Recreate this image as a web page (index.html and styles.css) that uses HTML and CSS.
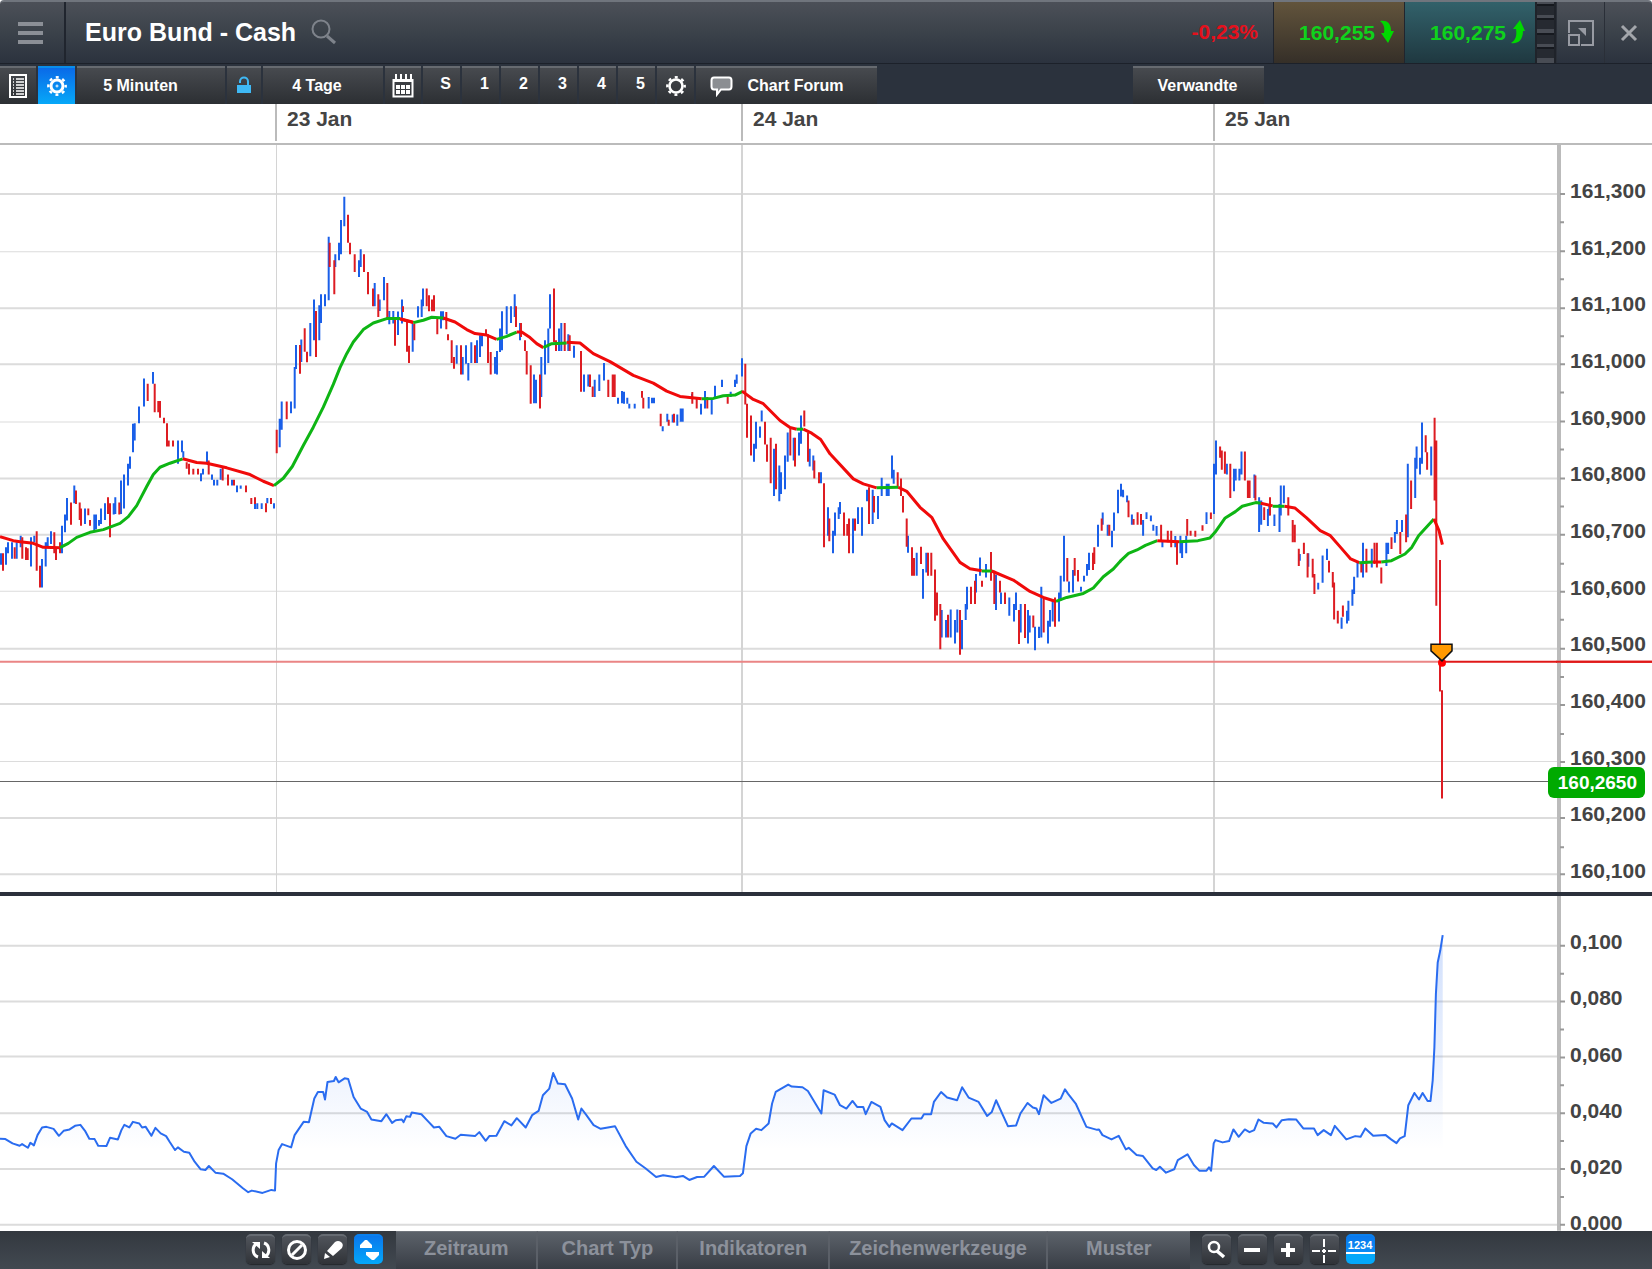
FILE: index.html
```
<!DOCTYPE html>
<html lang="de">
<head>
    <meta charset="UTF-8">
    <meta name="viewport" content="width=device-width, initial-scale=1.0">
    <title>Euro Bund - Cash</title>
    <link rel="stylesheet" href="styles.css">
</head>
<body>
    <header class="titlebar">
        <button class="menu-button" aria-label="Menu">
            <svg width="25" height="22" viewBox="0 0 25 22"><path d="M0 2h25M0 11h25M0 20h25" stroke="#8b8f96" stroke-width="4"/></svg>
        </button>
        <h1>Euro Bund - Cash</h1>
        <button class="search-button" aria-label="Suche">
            <svg width="26" height="26" viewBox="0 0 26 26" fill="none" stroke="#7e838b" stroke-width="2"><circle cx="10" cy="10" r="8.5"/><path d="M16 17l8 7" stroke-width="3"/></svg>
        </button>
        <span class="change">-0,23%</span>
        <button class="price sell">160,255
            <svg width="14" height="24" viewBox="0 0 14 24"><path d="M0 1C6 0 11 2 11 11h3L8 23 1 13h3C5 8 4 4 0 1z" fill="#00d800"/></svg>
        </button>
        <button class="price buy">160,275
            <svg width="14" height="24" viewBox="0 0 14 24"><path d="M0 23C6 24 12 21 12 11h2L9 0 2 9h3C6 15 5 20 0 23z" fill="#00d800"/></svg>
        </button>
        <div class="ladder"><i></i><i></i><i></i><i></i></div>
        <button class="window-button" aria-label="Maximieren">
            <svg width="26" height="26" viewBox="0 0 26 26" fill="none" stroke="#989ba3" stroke-width="2"><path d="M1 13V1h24v24H13"/><path d="M1 15h10v10H1z"/><path d="M10 8h8v8z" fill="#989ba3" stroke="none"/></svg>
        </button>
        <button class="window-button" aria-label="Schliessen">
            <svg width="18" height="18" viewBox="0 0 18 18"><path d="M2 2l14 14M16 2L2 16" stroke="#a3a6ab" stroke-width="3"/></svg>
        </button>
    </header>

    <nav class="toolbar">
        <button class="tool list" aria-label="Liste">
            <svg width="18" height="24" viewBox="0 0 18 24" fill="none" stroke="#fff"><path d="M1 1h16v22H1z" stroke-width="2"/><path d="M7 5h8M7 8h8M7 11h8M7 14h8M7 17h8M7 20h8M4 5h1M4 8h1M4 11h1M4 14h1M4 17h1M4 20h1" stroke-width="1.5"/></svg>
        </button>
        <button class="tool active" aria-label="Einstellungen">
            <svg width="20" height="20" viewBox="0 0 20 20" fill="none" stroke="#fff"><circle cx="10" cy="10" r="6" stroke-width="3"/><circle cx="10" cy="10" r="8.7" stroke-width="2.4" stroke-dasharray="3 3.83" stroke-dashoffset="1.5"/><circle cx="10" cy="10" r="1" stroke-width="1"/></svg>
        </button>
        <button class="tool interval">5 Minuten</button>
        <button class="tool lock" aria-label="Sperren">
            <svg width="14" height="17" viewBox="0 0 14 17"><path d="M0 9h14v8H0z" fill="#3fb9f5"/><path d="M3 7V5.500C3 0 11 0 11 5.500V9" fill="none" stroke="#3fb9f5" stroke-width="2"/></svg>
        </button>
        <button class="tool range">4 Tage</button>
        <button class="tool calendar" aria-label="Kalender">
            <svg width="22" height="24" viewBox="0 0 22 24"><path d="M1.500 6h19v16.500h-19z" fill="none" stroke="#fff" stroke-width="2"/><path d="M1 7h20M4 0v6M9 0v6M14 0v6M19 0v6" stroke="#fff" stroke-width="2"/><path d="M4 11h4v4H4zM9 11h4v4H9zM14 11h4v4h-4zM4 16h4v4H4zM9 16h4v4H9zM14 16h4v4h-4z" fill="#fff"/></svg>
        </button>
        <button class="tool preset">S</button>
        <button class="tool preset">1</button>
        <button class="tool preset">2</button>
        <button class="tool preset">3</button>
        <button class="tool preset">4</button>
        <button class="tool preset">5</button>
        <button class="tool" aria-label="Optionen">
            <svg width="20" height="20" viewBox="0 0 20 20" fill="none" stroke="#fff"><circle cx="10" cy="10" r="6.500" stroke-width="2.600"/><circle cx="10" cy="10" r="8.700" stroke-width="2.400" stroke-dasharray="3 3.83" stroke-dashoffset="1.500"/></svg>
        </button>
        <button class="tool forum">
            <svg width="23" height="21" viewBox="0 0 23 21"><path d="M4 1.500h15q2.500 0 2.500 3v6q0 3-2.500 3h-8l-4 5v-5H4q-2.500 0-2.500-3v-6q0-3 2.500-3z" fill="#8b8e92" stroke="#fff" stroke-width="2"/></svg>
            Chart Forum
        </button>
        <button class="tool related">Verwandte</button>
    </nav>

    <div class="timeline">
        <span>23 Jan</span>
        <span>24 Jan</span>
        <span>25 Jan</span>
    </div>

    <main class="charts">
        <section class="pane price-pane">
            <svg class="plot" viewBox="0 145 1652 746" preserveAspectRatio="none">
                <path class="grid" d="M0 194H1557M0 308H1557M0 364H1557M0 478H1557M0 534H1557M0 648H1557M0 703H1557M0 817H1557M0 873H1557"/>
                <path class="grid thin" d="M0 251.500H1557M0 421.500H1557M0 590.500H1557M0 760.500H1557"/>
                <path class="grid days" d="M742 145V891M1214 145V891"/>
                <path class="grid days thin" d="M276.500 145V891"/>
                <path class="alert-line faint" d="M0 661H1440"/>
                <path class="alert-line" d="M1440 661H1652"/>
                <path class="last-line" d="M0 780.500H1560"/>
                <g id="candles"></g>
                <g id="average"></g>
                <path class="axis" d="M1559 145V891"/>
                <path class="ticks" d="M1560 194h5M1560 251h5M1560 308h5M1560 364h5M1560 421h5M1560 478h5M1560 534h5M1560 591h5M1560 648h5M1560 704h5M1560 761h5M1560 817h5M1560 873h5M1560 222h4M1560 279h4M1560 336h4M1560 392h4M1560 449h4M1560 506h4M1560 563h4M1560 619h4M1560 676h4M1560 733h4M1560 789h4M1560 846h4"/>
                <path class="alert-line" d="M1556 661H1652"/>
                <circle cx="1442" cy="662" r="4" fill="#f00"/>
                <path d="M1431 643.500H1452V650L1442 660L1431 650Z" fill="#f90" stroke="#111" stroke-width="1.500"/>
            </svg>
            <ul class="scale">
                <li>161,300</li>
                <li>161,200</li>
                <li>161,100</li>
                <li>161,000</li>
                <li>160,900</li>
                <li>160,800</li>
                <li>160,700</li>
                <li>160,600</li>
                <li>160,500</li>
                <li>160,400</li>
                <li>160,300</li>
                <li>160,200</li>
                <li>160,100</li>
            </ul>
            <output class="price-tag">160,2650</output>
        </section>

        <section class="pane indicator-pane">
            <svg class="plot" viewBox="0 895 1652 336" preserveAspectRatio="none">
                <defs>
                    <linearGradient id="fade" gradientUnits="userSpaceOnUse" x1="0" y1="935" x2="0" y2="1150">
                        <stop offset="0" stop-color="#2a6cf0" stop-opacity=".22"/>
                        <stop offset="1" stop-color="#2a6cf0" stop-opacity="0"/>
                    </linearGradient>
                </defs>
                <path class="grid" d="M0 945H1557M0 1001H1557M0 1056H1557M0 1113H1557M0 1169H1557M0 1225H1557"/>
                <path id="area" fill="url(#fade)"/>
                <path id="line" class="indicator-line"/>
                <path class="axis" d="M1559 895V1231"/>
                <path class="ticks" d="M1560 945h5M1560 1001h5M1560 1057h5M1560 1113h5M1560 1169h5M1560 1225h5M1560 973h4M1560 1029h4M1560 1085h4M1560 1141h4M1560 1197h4"/>
            </svg>
            <ul class="scale">
                <li>0,100</li>
                <li>0,080</li>
                <li>0,060</li>
                <li>0,040</li>
                <li>0,020</li>
                <li>0,000</li>
            </ul>
        </section>
    </main>

    <footer class="bottombar">
        <div class="icons left">
            <button class="icon" aria-label="Aktualisieren">
                <svg width="20" height="20" viewBox="0 0 20 20" fill="none" stroke="#fff" stroke-width="3"><path d="M7 17C1 15 1 7 5 4M13 3c6 2 6 10 2 13"/><path d="M1 2h8v7zM19 18h-8v-7z" fill="#fff" stroke="none"/></svg>
            </button>
            <button class="icon" aria-label="Entfernen">
                <svg width="22" height="22" viewBox="0 0 22 22" fill="none" stroke="#fff" stroke-width="3"><circle cx="11" cy="11" r="8.500"/><path d="M6 16L16 6"/></svg>
            </button>
            <button class="icon" aria-label="Zeichnen">
                <svg width="20" height="20" viewBox="0 0 20 20" fill="#fff"><path d="M1 19l1-6 5 4zM4 11L12 2q3-2 6 0t1 6l-9 8z"/></svg>
            </button>
            <button class="icon active" aria-label="Skalieren">
                <svg width="20" height="22" viewBox="0 0 20 22" fill="#fff"><path d="M1 9V6l5-5h2l5 5v3zM7 13h13v3l-5 5h-2l-6-5z"/></svg>
            </button>
        </div>
        <nav class="tabs">
            <button>Zeitraum</button>
            <button>Chart Typ</button>
            <button>Indikatoren</button>
            <button>Zeichenwerkzeuge</button>
            <button>Muster</button>
        </nav>
        <div class="icons right">
            <button class="icon" aria-label="Zoom">
                <svg width="20" height="20" viewBox="0 0 20 20" fill="none" stroke="#fff"><circle cx="8" cy="7" r="5" stroke-width="2.500"/><path d="M11 11l7 6" stroke-width="3.500"/></svg>
            </button>
            <button class="icon" aria-label="Verkleinern">
                <svg width="16" height="16" viewBox="0 0 16 16"><path d="M0 8h16" stroke="#fff" stroke-width="4"/></svg>
            </button>
            <button class="icon" aria-label="Vergr&ouml;&szlig;ern">
                <svg width="16" height="16" viewBox="0 0 16 16"><path d="M1 8h14M8 1v14" stroke="#fff" stroke-width="4"/></svg>
            </button>
            <button class="icon" aria-label="Fadenkreuz">
                <svg width="26" height="26" viewBox="0 0 26 26"><path d="M1 14h8M11 14h4M17 14h8M13 2v8M13 12v4M13 18v8" stroke="#fff" stroke-width="2"/></svg>
            </button>
            <button class="icon active digits">1234</button>
        </div>
    </footer>
    <script src="chart.js"></script>
</body>
</html>
```
FILE: styles.css
```
* {
    box-sizing: border-box;
}
body {
    margin: 0;
    min-height: 100vh;
    display: flex;
    flex-direction: column;
    background: #fff;
    font-family: "Liberation Sans", Arial, sans-serif;
    font-weight: bold;
}
button {
    margin: 0;
    padding: 0;
    border: none;
    background: none;
    color: #fff;
    font: inherit;
    cursor: pointer;
    display: flex;
    align-items: center;
    justify-content: center;
}
svg {
    flex: none;
}

/* Title bar */
.titlebar {
    display: flex;
    height: 64px;
    border-top: 2px solid #70757d;
    border-bottom: 1px solid #1c212a;
    border-radius: 4px 4px 0 0;
    background: linear-gradient(#4c5058, #3b424a 50%, #2b323e);
}
.menu-button {
    width: 66px;
    padding-right: 4px;
    border-right: 2px solid #20252e;
}
.titlebar h1 {
    margin: 0;
    padding: 0 15px 0 19px;
    line-height: 60px;
    font-size: 25px;
    color: #fff;
    white-space: nowrap;
}
.search-button {
    padding-bottom: 2px;
}
.change {
    margin-left: auto;
    padding-right: 15px;
    line-height: 60px;
    font-size: 21px;
    color: #e5101c;
}
.price {
    width: 131px;
    padding: 0 10px 0 0;
    justify-content: flex-end;
    gap: 5px;
    border-left: 1px solid #20252e;
    font-size: 21px;
    color: #0fd21c;
}
.price svg {
    margin-bottom: 2px;
}
.sell {
    background: linear-gradient(#62543c, #352f28);
}
.buy {
    background: linear-gradient(#32616a, #1f3840);
}
.ladder {
    width: 21px;
    display: flex;
    flex-direction: column;
    justify-content: space-between;
    padding: 2px 0 5px;
    background: #484c54;
    border-left: 2px solid #1f232a;
    border-right: 2px solid #1f232a;
}
.ladder i {
    height: 11px;
    background: #262a31;
    border-top: 2px solid #16191f;
}
.window-button {
    width: 48px;
    border-left: 1px solid #2a2f38;
}

/* Toolbar */
.toolbar {
    display: flex;
    height: 40px;
    padding-top: 2px;
    gap: 2px;
    background: #2b323d;
}
.tool {
    width: 37px;
    border-top: 2px solid #666a70;
    background: linear-gradient(#474a4f, #2c2f33);
    font-size: 16px;
}
.tool.list, .tool.calendar {
    width: 36px;
}
.tool.active {
    border-top-color: #0a8dea;
    background: linear-gradient(#0a6ae8, #06a8f8);
}
.interval {
    width: 148px;
    padding-right: 21px;
}
.tool.lock {
    width: 34px;
    padding-bottom: 4px;
}
.range {
    width: 120px;
    padding-right: 12px;
}
.preset {
    padding: 0 0 4px 8px;
}
.forum {
    width: 181px;
    gap: 15px;
    padding-right: 20px;
}
.related {
    width: 131px;
    margin: 0 388px 0 auto;
    padding-right: 2px;
}

/* Dates above the plot */
.timeline {
    display: grid;
    grid-template-columns: 466fr 472fr 439fr;
    height: 41px;
    padding: 0 0 2px calc(100% * 275 / 1652);
    border-bottom: 2px solid #bbb;
}
.timeline span {
    padding-left: 10px;
    border-left: 2px solid #bbb;
    font-size: 21px;
    line-height: 30px;
    color: #444;
}

/* Chart panes */
.charts {
    flex: 1;
    display: flex;
    flex-direction: column;
}
.pane {
    position: relative;
    display: grid;
    grid-template: minmax(0, 1fr) / 1fr;
    overflow: hidden;
}
.price-pane {
    flex: 750 1 0;
    border-bottom: 4px solid #2b303b;
}
.indicator-pane {
    flex: 336 1 0;
}
.plot {
    grid-area: 1 / 1;
    width: 100%;
    height: 100%;
}
.scale {
    grid-area: 1 / 1;
    justify-self: end;
    width: 82px;
    margin: 0;
    padding: 34px 0 9px;
    list-style: none;
    display: flex;
    flex-direction: column;
    justify-content: space-between;
    font-size: 21px;
    line-height: 24px;
    color: #444;
}
.indicator-pane .scale {
    margin-bottom: -4px;
    padding: 34px 0 0;
}
.price-tag {
    position: absolute;
    top: 83.2%;
    right: 7px;
    padding: 0 8px 0 10px;
    border-radius: 6px;
    background: #0a0;
    color: #fff;
    font-size: 19px;
    line-height: 31px;
}
.grid {
    stroke: #dcdcdc;
    stroke-width: 2;
}
.days {
    stroke: #d4d4d4;
}
.thin {
    stroke-width: 1;
}
.axis {
    stroke: #bbb;
    stroke-width: 4;
}
.ticks {
    stroke: #999;
    stroke-width: 2;
}
.alert-line {
    stroke: #e01818;
    stroke-width: 2;
}
.faint {
    stroke: #ea8585;
}
.last-line {
    stroke: #666;
    stroke-width: 1;
}
.up, .down {
    stroke-width: 2;
}
.up {
    stroke: #1a5fe8;
}
.down {
    stroke: #dd1c22;
}
.rising, .falling {
    fill: none;
    stroke-width: 3;
    stroke-linejoin: round;
}
.rising {
    stroke: #0eb514;
}
.falling {
    stroke: #f00a0a;
}
.indicator-line {
    fill: none;
    stroke: #2a6cf0;
    stroke-width: 2;
    stroke-linejoin: round;
}

/* Bottom bar */
.bottombar {
    display: flex;
    height: 38px;
    background: linear-gradient(#33383f, #424951);
}
.icons {
    display: flex;
    gap: 7px;
    padding-top: 3px;
}
.left {
    padding-left: 246px;
    padding-right: 13px;
}
.right {
    padding-left: 12px;
}
.icon {
    width: 29px;
    height: 30px;
    border-top: 2px solid #666b72;
    border-radius: 5px;
    background: linear-gradient(#50545b, #303338);
    box-shadow: 0 1px 1px #24272b;
}
.icon.active {
    border-top-color: #0a80ee;
    background: linear-gradient(#0a78ec, #04a8fa);
    box-shadow: none;
}
.icon.digits {
    background: linear-gradient(#0a78ec, #0a8cf4 58%, #fff 58%, #fff 66%, #04a8fa 66%);
    align-items: flex-start;
    padding-top: 3px;
    font-size: 11px;
}
.tabs {
    display: flex;
}
.tabs button {
    padding: 0 28px 4px;
    border-right: 2px solid #5b6068;
    border-top: 1px solid #70757c;
    background: linear-gradient(#5c626a, #383d45);
    color: #8c919b;
    font-size: 20px;
}
.tabs button:nth-child(2) {
    padding: 0 23px 4px;
}
.tabs button:nth-child(3) {
    padding: 0 21px 4px;
}
.tabs button:nth-child(4) {
    padding: 0 19px 4px;
}
.tabs button:last-child {
    padding: 0 38px 4px;
    border-right: none;
}
```
FILE: chart.js
```
// Each block: origin and scale of its samples, candles as "x high low", average as polylines
const blocks = [
    {
        x: 0, y: 180, sx: 3, sy: 3,
        up: '3 1118 1152,18 1100 1152,24 1085 1118,36 1085 1134,50 1085 1134,62 1065 1100,93 1070 1157,103 1065 1085,126 1135 1220,137 1085 1157,143 1070 1100,153 1052 1090,186 1035 1118,195 1002 1055,201 952 1020,223 915 968,255 984 1030,283 1002 1050,288 1002 1046,297 1018 1035,303 984 1030,315 968 1018,341 968 1002,346 950 1000,363 900 1000,372 882 984,384 850 915,390 828 865,399 730 815,404 728 780,417 678 728,432 594 678,459 575 610,534 780 850,546 780 815,550 812 832,603 878 902,609 865 882,621 813 850,636 882 898,642 898 915,652 898 915,662 865 898,696 898 915,711 915 935,722 915 925,765 965 985,772 968 985,785 968 985,802 952 968,822 968 984,839 715 800,845 663 748,873 663 698,884 560 684,888 494 566,904 478 545,931 428 528,942 358 480,958 375 480,963 342 428,975 342 378,986 170 360,1006 222 260,1017 188 240,1023 120 222,1033 50 138,1077 240 290,1082 207 260,1124 308 378,1139 358 392,1152 290 360,1168 392 432,1180 392 430,1194 394 464,1206 358 430,1238 430 514',
        down: '9 1118 1170,44 1100 1134,67 1070 1134,78 1100 1138,83 1103 1138,110 1052 1170,120 1155 1220,163 1055 1118,168 1100 1138,180 1085 1118,213 966 1032,228 930 970,239 966 1018,243 984 1035,265 984 1004,270 1018 1035,324 950 1000,330 968 1070,358 966 1002,443 610 662,464 610 695,475 662 695,480 662 712,492 712 728,501 728 798,506 780 798,519 780 798,560 845 865,567 850 882,580 865 882,594 865 882,626 840 882,668 862 900,684 882 915,702 898 915,738 915 935,754 952 970,765 950 970,798 968 995,813 952 970,830 748 818,860 663 716,900 494 580,914 444 514,921 514 546,948 392 530,989 188 260,1003 240 342,1044 104 188,1050 188 222,1064 222 275,1092 222 275,1104 275 342,1119 325 378,1135 342 410,1162 308 415,1185 415 496,1209 378 395,1221 425 514,1227 496 548,1243 430 480',
        average: [
            ['falling', '0 1068,40 1080,60 1083,100 1088,130 1100,180 1101'],
            ['rising', '180 1101,205 1088,230 1070,270 1055,310 1047,360 1028,385 1008,410 975,440 918,460 882,480 860,510 848,548 835'],
            ['falling', '548 835,590 846,620 848,680 862,750 882,790 902,822 915'],
            ['rising', '822 915,850 893,877 858,910 795,940 740,970 680,1000 612,1020 562,1040 520,1060 485,1090 448,1120 428,1160 415,1200 415'],
            ['falling', '1200 415,1240 426']
        ]
    },
    {
        x: 400, y: 260, sx: 3, sy: 3,
        up: '54 138 172,65 118 170,69 85 138,123 153 205,129 153 180,170 255 310,188 290 342,198 255 310,205 308 360,214 246 308,231 240 308,240 225 290,246 225 258,285 290 340,291 272 342,300 205 275,306 153 270,320 138 222,333 138 188,344 102 170,360 188 240,402 342 428,408 358 428,424 290 410,435 240 342,445 205 308,450 102 205,477 205 272,484 188 272,505 222 272,522 256 292,552 342 394,565 342 378,584 358 410,598 342 392,612 308 360,654 412 430,666 392 428,672 394 430,682 412 430,688 430 444,704 430 444,746 410 444,756 412 428,762 412 428,788 497 512,802 460 484,818 462 486,832 462 496,842 444 484,848 444 484,876 400 415,903 430 462,915 392 444,935 415 462,945 376 410,966 358 380,992 394 410,1005 358 380,1010 342 370,1026 294 348',
        down: '80 85 138,87 105 153,96 118 153,102 105 153,112 175 222,139 155 207,144 222 240,155 240 308,162 290 325,183 255 342,225 255 308,258 207 225,264 222 308,272 275 342,348 138 200,363 188 230,375 240 272,380 272 342,392 315 430,420 342 444,462 85 245,468 240 272,494 188 272,509 225 272,543 272 394,570 342 380,578 378 410,625 358 410,638 342 410,644 342 410,726 392 412,730 412 444,782 460 497,806 478 496,822 460 486,877 395 430,890 410 444,922 410 444,983 410 430,1036 310 432',
        average: [
            ['falling', '0 176,40 187'],
            ['rising', '40 187,70 180,95 171,130 173'],
            ['falling', '130 173,165 185,200 208,225 220,260 224,290 237'],
            ['rising', '290 237,320 228,350 215'],
            ['falling', '350 215,365 215,390 232,410 250,430 262'],
            ['rising', '430 262,455 250,500 248'],
            ['falling', '500 246,540 248,580 280,630 304,700 345,760 368,800 392,840 408,905 415'],
            ['rising', '905 415,940 414,970 406,1005 404,1028 393']
        ]
    },
    {
        x: 730, y: 340, sx: 3, sy: 3,
        up: '72 310 364,78 244 325,90 258 292,95 210 243,132 325 466,148 375 482,153 395 460,165 345 446,173 276 364,191 292 360,207 276 345,213 225 310,239 325 378,250 345 390,273 395 428,294 500 585,309 570 638,315 516 585,326 500 535,330 484 520,369 534 638,384 500 550,396 500 585,411 448 482,428 448 550,444 466 535,455 412 466,470 430 466,476 430 466,486 345 414,491 388 430,534 585 636,560 636 705,579 685 774,589 636 695,635 808 890,648 838 890,662 806 890,675 838 908,682 806 875,696 838 925,707 790 838,711 738 806,738 700 755,750 650 705,768 670 710,798 702 808,813 755 790,838 770 825,852 790 842,858 755 808,872 790 875,894 808 908,899 824 875,915 858 928,927 858 892,934 738 890,954 840 908,960 808 858,968 780 842,987 755 842,992 705 780,1002 585 722,1017 722 755,1029 688 755,1053 738 752,1062 705 722,1071 670 705,1077 636 688,1104 552 618,1118 516 552,1133 552 585,1146 570 620,1152 516 570,1164 448 518,1173 430 466,1179 448 466',
        down: '51 190 292,63 225 345,105 244 312,111 312 364,122 292 428,138 310 446,181 264 345,195 292 378,223 210 258,234 276 364,253 360 414,267 395 428,282 428 620,298 534 602,342 516 585,352 550 585,357 534 638,375 534 570,417 440 550,432 466 516,503 395 440,513 414 466,519 466 516,530 534 618,546 620 705,552 652 705,573 618 670,594 636 705,604 636 705,615 686 840,621 755 824,631 790 925,654 822 890,690 808 942,723 738 790,735 720 790,756 720 738,783 634 720,793 690 790,810 720 755,825 755 790,867 808 910,885 790 892,910 824 860,941 775 875,975 770 858,1012 652 722,1034 652 705,1044 688 722,1089 636 688,1093 620 670,1115 534 570,1138 552 585',
        average: [
            ['falling', '36 152,70 177,100 190,150 240,180 261,200 266'],
            ['rising', '200 266,220 266'],
            ['falling', '220 266,245 278,272 297,300 340,370 415,400 430,440 442'],
            ['rising', '440 442,505 440'],
            ['falling', '505 440,530 452,570 500,605 530,640 595,690 665,720 684,755 690'],
            ['rising', '755 691,785 691'],
            ['falling', '785 691,850 718,900 752,940 770,978 782'],
            ['rising', '978 782,1010 770,1060 758,1090 742,1120 708,1150 685,1172 660']
        ]
    },
    {
        x: 1120, y: 400, sx: 2.947, sy: 3,
        up: '3 255 288,9 272 290,21 285 305,35 342 372,68 358 405,78 335 355,91 345 362,98 372 390,108 376 405,125 420 440,163 406 440,178 405 458,183 425 472,195 405 458,255 335 370,277 190 340,283 120 222,315 190 222,336 205 272,341 205 240,352 205 240,358 153 222,396 222 292,410 290 394,416 300 372,436 325 376,440 310 345,455 342 376,470 310 394,474 255 345,483 255 308,530 460 480,555 458 498,584 546 566,597 464 546,610 444 478,653 650 684,669 630 668,673 600 660,685 566 615,690 528 580,700 485 530,716 426 530,742 444 500,785 426 496,790 426 460,810 394 426,816 358 400,831 358 394,848 190 410,870 172 292,874 138 205,884 172 222,890 66 190,917 138 225',
        down: '25 300 350,40 355 372,52 335 372,62 340 372,121 372 420,141 390 425,151 390 440,168 420 492,198 355 405,208 390 405,222 390 408,243 374 390,268 336 355,295 138 172,300 150 208,309 153 220,325 190 292,368 153 240,377 240 292,382 240 292,399 225 300,425 320 358,442 290 345,496 290 345,509 358 425,515 372 425,527 444 496,542 426 460,553 458 530,568 474 530,573 520 580,616 480 515,627 514 560,631 545 656,642 630 668,657 614 648,711 485 515,726 444 515,750 426 490,757 426 500,770 500 548,800 410 445,826 394 460,843 342 425,858 240 325,901 104 155,905 155 208,927 52 300,932 120 615,943 478 872,949 868 1192',
        average: [
            ['rising', '0 482,25 458,50 448,75 434,110 420'],
            ['falling', '110 420,175 423'],
            ['rising', '175 423,230 420,265 412,280 395,310 352,340 333,360 317,400 306,415 308'],
            ['falling', '415 308,450 316'],
            ['rising', '450 317,485 317'],
            ['falling', '485 317,515 322,550 352,590 390,620 405,650 440,680 475,705 486'],
            ['rising', '705 486,745 484'],
            ['falling', '745 484,770 484'],
            ['rising', '770 484,800 480,840 460,860 440,880 405,925 355'],
            ['falling', '925 355,940 390,950 432']
        ]
    }
];

const indicator = [
    { x: 0, y: 1040, sx: 2.8, sy: 3, points: '0 296,15 297,35 310,55 317,62 312,78 323,85 308,95 316,105 285,118 262,130 260,150 266,165 287,178 272,195 268,210 257,225 254,238 272,250 296,265 297,275 317,298 318,308 293,330 298,340 270,348 254,362 262,372 245,390 250,398 262,408 260,424 287,435 263,450 280,465 288,475 305,490 330,498 322,515 335,530 338,545 365,562 388,575 390,585 378,603 398,625 401,650 418,680 445,695 457,705 452,735 459,760 450,770 452,773 370,780 330,790 312,815 322,825 285,850 245,865 246,880 175,890 155,905 155,910 178,917 125,935 122,940 110,948 126,965 114,975 116,990 170,1010 205,1028 215,1040 238,1068 243,1082 222,1098 248,1108 240,1125 238,1130 246,1138 228,1148 230,1153 217,1180 222,1200 245,1215 262,1230 260,1250 288,1275 296,1290 284,1330 288,1342 276,1360 302,1370 288,1390 287,1412 243,1432 256,1447 234,1472 262,1490 225,1508 212,1520 165,1538 145,1549 98' },
    { x: 540, y: 1040, sx: 2.8, sy: 3, points: '50 130,70 132,90 175,107 238,116 205,130 225,150 255,170 266,210 258,240 318,270 365,295 385,325 411,345 406,380 412,400 408,418 420,440 411,460 410,487 378,515 410,560 408,568 400,578 318,590 280,605 266,620 270,640 250,650 190,660 155,695 133,705 139,735 141,750 152,788 220,794 150,825 163,840 195,858 205,875 182,888 200,905 200,912 222,928 185,953 200,965 240,978 260,985 250,1015 270,1040 235,1068 235,1075 222,1095 222,1103 185,1123 155,1140 172,1168 180,1182 141,1200 172,1228 185,1252 227,1265 215,1277 180,1310 258,1333 256,1345 220,1365 188,1380 202,1390 205,1397 222,1410 165,1432 188,1458 175,1470 147,1478 160,1500 190,1530 260,1560 269' },
    { x: 1090, y: 880, sx: 2.79, sy: 3, points: '25 748,35 765,60 778,80 767,100 808,108 803,130 825,148 828,175 865,185 870,195 860,212 878,235 868,245 840,272 823,290 855,305 872,325 872,332 862,338 872,345 790,350 780,370 787,388 783,400 748,415 770,432 748,445 756,458 750,470 718,485 728,510 730,520 742,535 720,555 717,575 718,595 745,625 745,635 765,652 750,672 765,683 737,715 778,740 768,755 770,768 745,790 767,825 765,840 778,855 789,865 775,878 768,888 675,905 638,918 658,928 638,942 662,950 662,956 600,961 500,965 340,970 245,977 210,984 163' }
];

const parse = text => text.split(',').map(item => item.split(' ').map(Number));
const px = (block, x) => (block.x + x / block.sx).toFixed(1);
const py = (block, y) => (block.y + y / block.sy).toFixed(1);

function addPath(parent, name, d) {
    const path = document.createElementNS('http://www.w3.org/2000/svg', 'path');
    path.setAttribute('class', name);
    path.setAttribute('d', d);
    parent.appendChild(path);
}

const candles = document.getElementById('candles');
const average = document.getElementById('average');

blocks.forEach(block => {
    ['up', 'down'].forEach(kind => {
        const d = parse(block[kind]).map(([x, high, low]) => `M${px(block, x)} ${py(block, high)}V${py(block, low)}`);
        addPath(candles, kind, d.join(''));
    });
    block.average.forEach(([kind, points]) => {
        const d = parse(points).map(([x, y]) => `${px(block, x)} ${py(block, y)}`);
        addPath(average, kind, 'M' + d.join('L'));
    });
});

const line = indicator.flatMap(part => parse(part.points).map(([x, y]) => `${px(part, x)} ${py(part, y)}`)).join('L');
document.getElementById('line').setAttribute('d', 'M' + line);
document.getElementById('area').setAttribute('d', 'M0 1225L' + line + 'V1225Z');
```
